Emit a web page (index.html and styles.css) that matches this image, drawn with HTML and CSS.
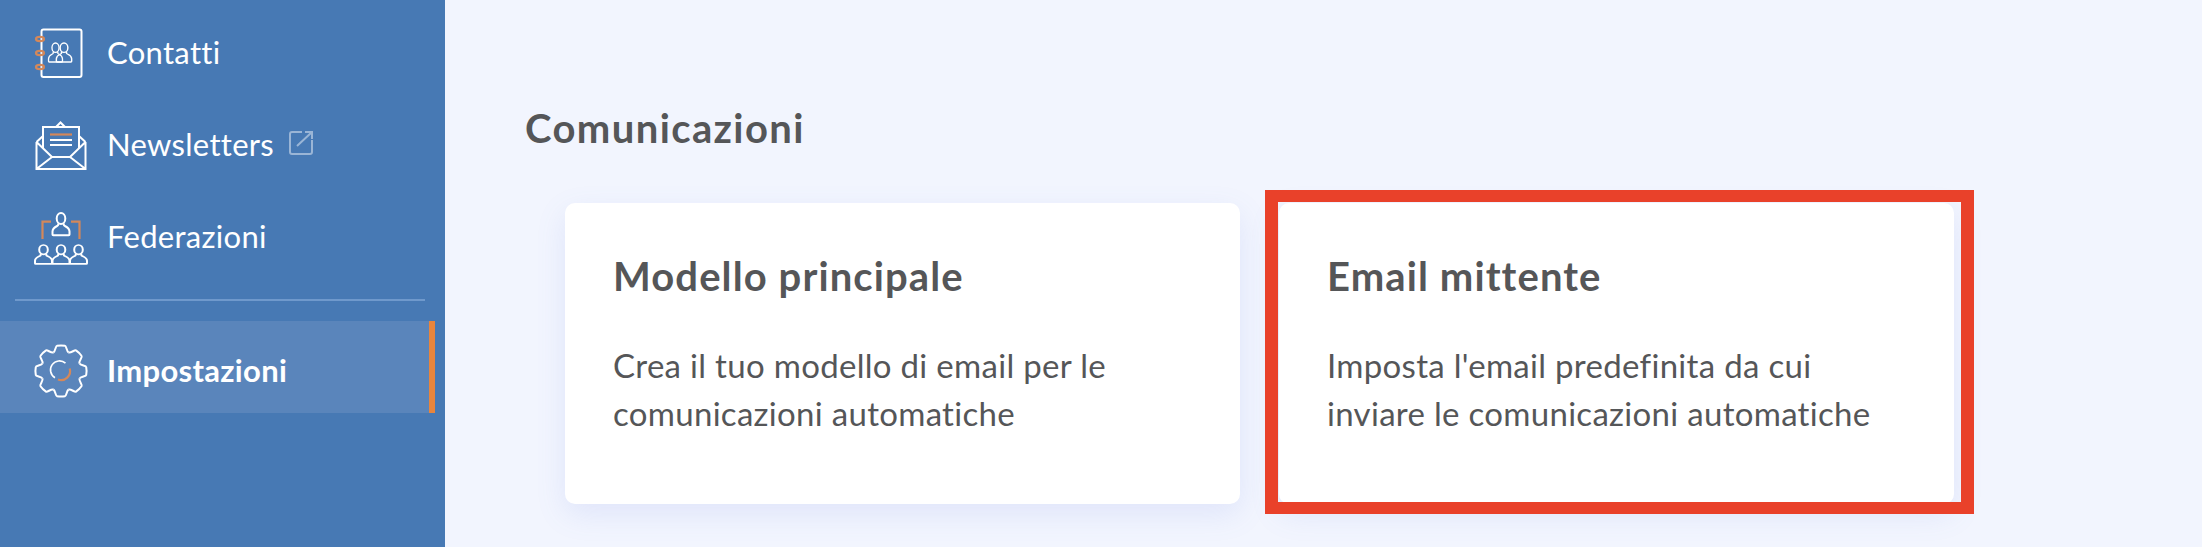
FILE: index.html
```html
<!DOCTYPE html>
<html lang="it">
<head>
  <meta charset="UTF-8">
  <meta name="viewport" content="width=device-width, initial-scale=1.0">
  <title>Impostazioni</title>
  <link rel="stylesheet" href="styles.css">
</head>
<body>
  <svg class="defs" width="0" height="0">
    <defs>
      <g id="person">
        <ellipse cx="0" cy="5.5" rx="4.3" ry="5.5"/>
        <path d="M-2.8 10.5v1.5c0 1.2-5.7 2-5.7 6.5v3q0 .8.8.8h15.4q.8 0 .8-.8v-3c0-4.5-5.7-5.3-5.7-6.5v-1.5"/>
      </g>
      <path id="tooth" d="M-7.65-18.48C-5.5-19.5-5.5-25-4-25.2Q0-26 4-25.2C5.5-25 5.5-19.5 7.65-18.48"/>
    </defs>
  </svg>

  <aside class="sidebar">
    <a class="nav-item" href="#">
      <svg class="nav-icon" viewBox="0 0 60 60">
        <rect class="line" x="10.5" y="6.5" width="40" height="47.5" rx="2"/>
        <ellipse class="accent" cx="9" cy="16" rx="4" ry="2.2"/>
        <ellipse class="accent" cx="9" cy="30" rx="4" ry="2.2"/>
        <ellipse class="accent" cx="9" cy="44" rx="4" ry="2.2"/>
        <use class="line thin" href="#person" transform="translate(24.5 20) scale(.82 .85)"/>
        <use class="line thin" href="#person" transform="translate(33 20) scale(.9 .85)"/>
      </svg>
      <span>Contatti</span>
    </a>
    <a class="nav-item" href="#">
      <svg class="nav-icon" viewBox="0 0 60 60">
        <path class="line" d="M5.5 27V54H54.5V27M5.5 27 21 42H39L54.5 27M5.5 54 21 42M54.5 54 39 42"/>
        <path class="line" d="M5.5 27 12 21M54.5 27 48 21M12 33V12H48V33M25 12 29.5 7.5 34 12"/>
        <path class="accent" d="M19 19.5H41"/>
        <path class="line" d="M19 25H41M19 30H41"/>
      </svg>
      <span>Newsletters</span>
      <svg class="ext-icon" viewBox="0 0 24 24">
        <path d="M13 1H3Q1 1 1 3V21Q1 23 3 23H21Q23 23 23 21V9M8 15 23 1M16 1H23V8"/>
      </svg>
    </a>
    <a class="nav-item" href="#">
      <svg class="nav-icon" viewBox="0 0 60 60">
        <path class="accent" d="M11.5 32V14.7H20M40 14.7H48.5V32"/>
        <use class="line" href="#person" transform="translate(30 6)"/>
        <use class="line" href="#person" transform="translate(12.5 38) scale(1 .85)"/>
        <use class="line" href="#person" transform="translate(30 38) scale(1 .85)"/>
        <use class="line" href="#person" transform="translate(47.5 38) scale(1 .85)"/>
      </svg>
      <span>Federazioni</span>
    </a>
    <hr class="divider">
    <a class="nav-item active" href="#">
      <svg class="nav-icon" viewBox="0 0 60 60">
        <g class="line" transform="translate(30 30)">
          <use href="#tooth"/>
          <use href="#tooth" transform="rotate(45)"/>
          <use href="#tooth" transform="rotate(90)"/>
          <use href="#tooth" transform="rotate(135)"/>
          <use href="#tooth" transform="rotate(180)"/>
          <use href="#tooth" transform="rotate(225)"/>
          <use href="#tooth" transform="rotate(270)"/>
          <use href="#tooth" transform="rotate(315)"/>
          <path class="thin" d="M-6 6.7A9 9 0 1 1 4.5-7.8"/>
          <path class="accent" d="M8.7-2.5A9 9 0 0 1-3 8.5"/>
        </g>
      </svg>
      <span>Impostazioni</span>
    </a>
  </aside>

  <main class="content">
    <h1 class="section-title">Comunicazioni</h1>
    <div class="cards">
      <div class="card">
        <h2>Modello principale</h2>
        <p>Crea il tuo modello di email per le comunicazioni automatiche</p>
      </div>
      <div class="card highlighted">
        <h2>Email mittente</h2>
        <p>Imposta l'email predefinita da cui inviare le comunicazioni automatiche</p>
      </div>
    </div>
  </main>
</body>
</html>
```

FILE: styles.css
```css
html, body {
  overflow: hidden;
}
body {
  display: flex;
  height: 547px;
  margin: 0;
  font-family: Lato, "Open Sans", Arial, sans-serif;
  background-color: #f2f5fe;
  color: #555658;
}
.defs {
  position: absolute;
}
.sidebar {
  flex: 0 0 445px;
  padding-top: 7px;
  box-sizing: border-box;
  background-color: #4779b4;
}
.nav-item {
  display: flex;
  align-items: center;
  gap: 16px;
  height: 92px;
  padding-left: 31px;
  box-sizing: border-box;
  color: white;
  font-size: 31px;
  letter-spacing: 0.3px;
  text-decoration: none;
}
.nav-item span {
  margin-top: -2px;
}
.nav-icon {
  flex: none;
  width: 60px;
  height: 60px;
}
.line, .accent, .thin, .ext-icon {
  fill: none;
  stroke-width: 2;
}
.line {
  stroke: white;
}
.thin {
  stroke-width: 1.6;
}
.accent {
  stroke: #d4885a;
  stroke-width: 2.2;
}
.ext-icon {
  flex: none;
  width: 24px;
  height: 24px;
  margin: -4px 0 0 -1px;
  stroke: rgba(255, 255, 255, 0.45);
}
.divider {
  height: 2px;
  margin: 16px 20px 20px 15px;
  border: none;
  background-color: #6f99cc;
}
.active {
  width: 435px;
  padding-top: 8px;
  border-right: 6px solid #e8853d;
  background-color: #5a85bb;
  font-weight: 700;
}
.content {
  flex: 1;
  padding: 103px 0 0 80px;
}
.section-title {
  margin: 0;
  font-size: 40px;
  line-height: 50px;
  font-weight: 700;
  letter-spacing: 1.4px;
}
.cards {
  display: flex;
  gap: 39px;
  margin: 50px 0 0 40px;
}
.card {
  position: relative;
  width: 675px;
  height: 301px;
  padding: 48px 64px 0 48px;
  box-sizing: border-box;
  border-radius: 10px;
  background-color: white;
  box-shadow: 0 10px 30px rgba(100, 125, 225, 0.13);
}
.card h2 {
  margin: 0;
  font-size: 40px;
  line-height: 50px;
  font-weight: 700;
  letter-spacing: 1.1px;
}
.card p {
  margin: 40px 0 0;
  font-size: 33px;
  line-height: 48px;
  letter-spacing: 0.3px;
}
.highlighted::after {
  content: "";
  position: absolute;
  top: -13px;
  right: -20px;
  bottom: -10px;
  left: -14px;
  border: 13px solid #e9412a;
  border-top-width: 12px;
  border-bottom-width: 12px;
}
```
